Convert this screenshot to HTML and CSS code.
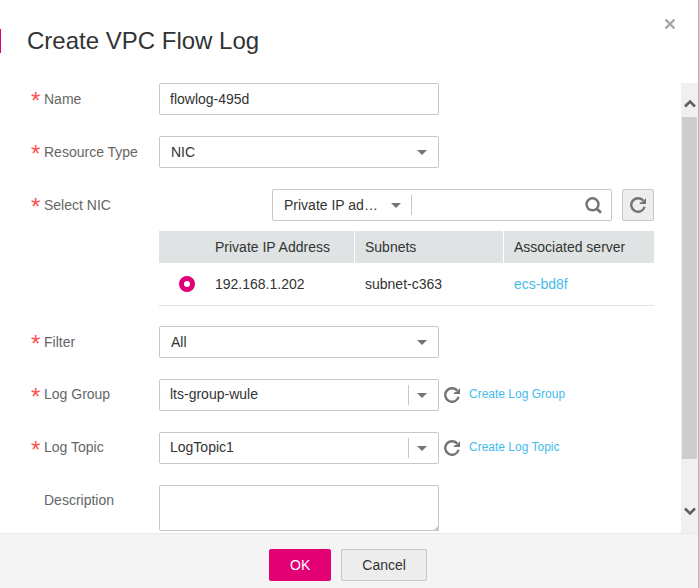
FILE: index.html
```html
<!DOCTYPE html>
<html lang="en">
<head>
<meta charset="utf-8">
<meta name="viewport" content="width=device-width, initial-scale=1">
<title>Create VPC Flow Log</title>
<link rel="stylesheet" href="styles.css">
</head>
<body>
<svg class="sprite" aria-hidden="true">
  <symbol id="refresh" viewBox="0 0 16 16">
    <path d="M14.600 9.800A6.800 6.800 0 1 1 13.400 3.800" fill="none" stroke="#737373" stroke-width="2.400"/>
    <path d="M16 1v6h-6.200v-1.200l3.200-1.300z" fill="#737373"/>
  </symbol>
  <symbol id="caret" viewBox="0 0 10 5">
    <path d="M0 0h10L5 5z" fill="#737373"/>
  </symbol>
</svg>
<form class="dialog">
  <header class="dialog-head">
    <h1>Create VPC Flow Log</h1>
    <button type="button" class="close" aria-label="Close">
      <svg viewBox="0 0 10 10" width="10" height="10"><path d="M0.500 0.500l9 9M9.500 0.500l-9 9" stroke="#a8a8a8" stroke-width="2.400"/></svg>
    </button>
  </header>
  <div class="dialog-main">
    <div class="fields">
      <div class="row">
        <label class="label required" for="name">Name</label>
        <input class="control" id="name" type="text" value="flowlog-495d">
      </div>
      <div class="row">
        <label class="label required" for="type">Resource Type</label>
        <div class="picker">
          <select class="control" id="type"><option>NIC</option></select>
          <svg class="caret"><use href="#caret"/></svg>
        </div>
      </div>
      <div class="row">
        <label class="label required" for="search">Select NIC</label>
        <div class="nic">
          <div class="toolbar">
            <div class="search">
              <div class="search-type">
                <select aria-label="Search by"><option>Private IP ad…</option></select>
                <svg class="caret"><use href="#caret"/></svg>
              </div>
              <input id="search" type="text">
              <button type="button" class="icon-button" aria-label="Search">
                <svg viewBox="0 0 17 17" width="17" height="17" fill="none" stroke="#737373"><circle cx="7.500" cy="7.300" r="6" stroke-width="2.400"/><path d="M11.500 11.500l4.500 4.300" stroke-width="2.800"/></svg>
              </button>
            </div>
            <button type="button" class="refresh-box" aria-label="Refresh"><svg width="16" height="16"><use href="#refresh"/></svg></button>
          </div>
          <table>
            <colgroup><col class="col-radio"><col class="col-ip"><col class="col-subnet"><col></colgroup>
            <thead><tr><th></th><th>Private IP Address</th><th>Subnets</th><th>Associated server</th></tr></thead>
            <tbody><tr>
              <td><input type="radio" name="nic" aria-label="192.168.1.202" checked></td>
              <td>192.168.1.202</td><td>subnet-c363</td><td><a href="#">ecs-bd8f</a></td>
            </tr></tbody>
          </table>
        </div>
      </div>
      <div class="row">
        <label class="label required" for="filter">Filter</label>
        <div class="picker">
          <select class="control" id="filter"><option>All</option></select>
          <svg class="caret"><use href="#caret"/></svg>
        </div>
      </div>
      <div class="row raised">
        <label class="label required" for="group">Log Group</label>
        <div class="picker split">
          <select class="control" id="group"><option>lts-group-wule</option></select>
          <svg class="caret"><use href="#caret"/></svg>
        </div>
        <button type="button" class="icon-button" aria-label="Refresh log groups"><svg width="16" height="16"><use href="#refresh"/></svg></button>
        <a class="create" href="#">Create Log Group</a>
      </div>
      <div class="row raised">
        <label class="label required" for="topic">Log Topic</label>
        <div class="picker split">
          <select class="control" id="topic"><option>LogTopic1</option></select>
          <svg class="caret"><use href="#caret"/></svg>
        </div>
        <button type="button" class="icon-button" aria-label="Refresh log topics"><svg width="16" height="16"><use href="#refresh"/></svg></button>
        <a class="create" href="#">Create Log Topic</a>
      </div>
      <div class="row raised">
        <label class="label" for="description">Description</label>
        <div class="area">
          <textarea class="control" id="description"></textarea>
          <svg class="grip" viewBox="0 0 6 6"><path d="M6 0v6H0z" fill="#c8c8c8"/></svg>
        </div>
      </div>
    </div>
    <div class="scrollbar" aria-hidden="true">
      <svg viewBox="0 0 12 9" width="12" height="9"><path d="M1 7.500l5-5 5 5" fill="none" stroke="#606060" stroke-width="2.600"/></svg>
      <div class="thumb"></div>
      <svg viewBox="0 0 12 9" width="12" height="9"><path d="M1 1.500l5 5 5-5" fill="none" stroke="#606060" stroke-width="2.600"/></svg>
    </div>
  </div>
  <footer class="dialog-foot">
    <button type="submit" class="button primary">OK</button>
    <button type="button" class="button">Cancel</button>
  </footer>
</form>
</body>
</html>
```
FILE: styles.css
```css
* { box-sizing: border-box; }

body {
  margin: 0;
  color: #333;
  background: #fff;
  font: 14px/20px "Liberation Sans", Arial, sans-serif;
}

button, input, select, textarea {
  margin: 0;
  padding: 0;
  border: 0;
  background: none;
  color: inherit;
  font: inherit;
  outline: 0;
}

select { appearance: none; }
svg { display: block; }
a { color: #45bbec; text-decoration: none; }
.sprite { position: absolute; width: 0; height: 0; }

.dialog {
  display: flex;
  flex-direction: column;
  min-height: 100vh;
  border-right: 1px solid #b4b4b4;
}

.dialog-head {
  display: flex;
  justify-content: space-between;
  align-items: flex-start;
  padding: 19px 23px 19px 0;
}

h1 {
  margin: 10px 0 11px;
  padding-left: 26px;
  border-left: 1px solid #e20074;
  font-size: 24px;
  font-weight: 400;
  line-height: 24px;
}

.dialog-main {
  display: flex;
  flex: 1;
  justify-content: space-between;
}

.fields {
  display: flex;
  flex: 1;
  flex-direction: column;
  gap: 21px;
  padding: 0 27px 2px 31px;
}

.row { display: flex; align-items: flex-start; }

.label {
  display: flex;
  flex: none;
  width: 128px;
  height: 32px;
  padding-left: 13px;
  color: #666;
  line-height: 32px;
}

.required { padding-left: 0; }

.required::before {
  content: "*";
  width: 13px;
  color: #ff5050;
  font-size: 24px;
  line-height: 36px;
}

.raised .label { line-height: 30px; }

.control {
  display: block;
  width: 280px;
  height: 32px;
  padding: 0 10px;
  border: 1px solid #c8c8c8;
  border-radius: 2px;
  background: #fff;
}

.picker, .area { position: relative; }
.picker .control { padding-left: 11px; }
.split .control { padding: 0 10px 2px; }

.caret {
  position: absolute;
  top: 14px;
  right: 12px;
  width: 10px;
  height: 5px;
  pointer-events: none;
}

.split::after {
  content: "";
  position: absolute;
  top: 6px;
  right: 30px;
  height: 20px;
  border-left: 1px solid #c8c8c8;
}

.area .control { height: 46px; resize: none; }

.grip {
  position: absolute;
  right: 0;
  bottom: 0;
  width: 6px;
  height: 6px;
}

.row > .icon-button { padding: 8px 9px 8px 5px; }
.create { font-size: 12px; line-height: 30px; }

.nic { flex: 1; }

.toolbar {
  display: flex;
  justify-content: flex-end;
  gap: 10px;
  margin-bottom: 10px;
}

.search {
  display: flex;
  align-items: center;
  width: 340px;
  height: 32px;
  border: 1px solid #c8c8c8;
  border-radius: 2px;
}

.search-type {
  position: relative;
  width: 139px;
  border-right: 1px solid #c8c8c8;
}

.search-type select { display: block; width: 100%; padding-left: 11px; }
.search-type .caret { top: 8px; right: 10px; }
.search > input { flex: 1; min-width: 0; }
.search .icon-button { padding-right: 9px; }

.refresh-box {
  padding: 7px;
  border: 1px solid #c8c8c8;
  border-radius: 2px;
  background: #ededed;
}

table {
  width: 100%;
  margin-bottom: -1px;
  border-collapse: separate;
  border-spacing: 0;
  border-bottom: 1px solid #dfe3e3;
  table-layout: fixed;
}

.col-radio { width: 46px; }
.col-ip { width: 150px; }
.col-subnet { width: 149px; }

th, td { padding: 0 0 0 10px; text-align: left; }

th {
  height: 32px;
  background: #dfe3e3;
  font-weight: 400;
}

th:not(:first-child):not(:last-child) { border-right: 1px solid #fff; }
td { height: 42px; }
td:first-child { padding-left: 20px; }

input[type="radio"] {
  display: block;
  width: 16px;
  height: 16px;
  border: 5px solid #e20074;
  border-radius: 50%;
  appearance: none;
  background: #fff;
}

.scrollbar {
  display: flex;
  flex-direction: column;
  align-items: center;
  width: 17px;
  padding: 16px 0 17px;
  background: #f0f0f0;
}

.thumb {
  flex: 1;
  width: 15px;
  margin: 9px 0 48px;
  background: #cdcdcd;
}

.dialog-foot {
  display: flex;
  justify-content: center;
  gap: 10px;
  padding: 15px 2px 7px 0;
  border-top: 1px solid #e8e8e8;
  background: #f4f4f4;
}

.button {
  height: 32px;
  padding: 0 20px;
  border: 1px solid #c8c8c8;
  border-radius: 2px;
  background: #ededed;
}

.primary {
  border-color: #e20074;
  background: #e20074;
  color: #fff;
}
```
